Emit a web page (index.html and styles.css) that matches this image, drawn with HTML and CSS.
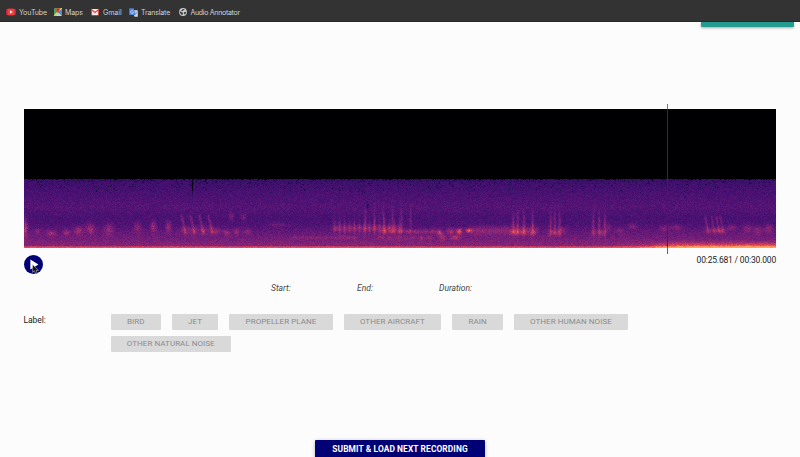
FILE: index.html
```html
<!DOCTYPE html>
<html lang="en">
<head>
<meta charset="utf-8">
<title>Audio Annotator</title>
<link rel="stylesheet" href="styles.css">
</head>
<body>
<nav class="bookmarks">
  <a class="bookmark youtube"><svg viewBox="0 0 10 8"><rect y=".8" width="10" height="6.4" rx="1.6" fill="#c9203f"/><rect x="1.5" y=".8" width="7" height="6.4" rx="1" fill="#f0403f"/><path d="M4 2.5v3L6.8 4z" fill="#fff"/></svg>YouTube</a>
  <a class="bookmark maps"><svg viewBox="0 0 8 8"><rect width="8" height="8" rx="1" fill="#3fa65b"/><path d="M0 7 7 0h1v1L1 8H0z" fill="#f4ca45"/><path d="M4 4 8 8H1z" fill="#c9ced2"/><path d="M4 4 8 1v6.5z" fill="#5389d8"/><path d="M2 1.7a1.9 1.9 0 0 1 3.8 0C5.8 3.4 4.2 4 4 5.4 3.7 4 2 3.4 2 1.7z" fill="#dc493e"/><circle cx="3.9" cy="1.8" r=".6" fill="#792820"/></svg>Maps</a>
  <a class="bookmark gmail"><svg viewBox="0 0 8 8"><rect y="1" width="8" height="6.3" rx=".7" fill="#f3eeee"/><path d="M.6 7V1.7L4 4.5l3.4-2.8V7" fill="none" stroke="#d9423a" stroke-width="1.1"/></svg>Gmail</a>
  <a class="bookmark translate"><svg viewBox="0 0 9 9"><path d="M3.5 2.2h4.7q.6 0 .6.6v5.4q0 .6-.6.6H5.5z" fill="#d5dae1"/><path d="M.7.2h4l2.1 6.7H.7Q.2 6.9.2 6.4V.7Q.2.2.7.2z" fill="#4b82dc"/><path d="M4.5 3.3a1.5 1.5 0 1 0 .1 1H3.3" fill="none" stroke="#fff" stroke-width=".6"/><path d="M6.3 4.2h2M7.6 4.2 6.5 6M6.7 5l1.1 1.3" fill="none" stroke="#697b91" stroke-width=".5"/></svg>Translate</a>
  <a class="bookmark annotator"><svg viewBox="0 0 8 8"><circle cx="4" cy="4" r="3.9" fill="#c9cbcd"/><path d="M.9 3 2.5 4.2l1.2.2.5.8-.6.7.1 1.2C1.9 6.8.7 5.3.9 3zM3.8.9l1.8.4-.4.9-1 .1-.3.8-1.2.2-.5-.6zM5 4.2l2-.5c.2 1.3-.3 2.2-1.2 2.8l-.9-1z" fill="#3b3d40"/></svg>Audio Annotator</a>
</nav>
<main>
  <div class="top-action"></div>
  <section class="player">
    <div class="spectrogram">
      <canvas id="spectrogram" width="752" height="139"></canvas>
      <div class="playhead"></div>
    </div>
    <div class="controls">
      <div class="play"><svg class="play-icon" viewBox="0 0 19 19"><circle cx="9.5" cy="9.5" r="9.5" fill="#010074"/><path d="M6.4 4.6v9.8l8-4.9z" fill="#fff"/></svg><svg class="pointer" viewBox="0 0 8 11"><path d="M.6.6v7.8l1.800-1.600 1.400 3.300 1.500-.7L4 6.300h2.500z" fill="#111" stroke="#ddd" stroke-width=".5"/></svg></div>
      <span class="time">00:25.681 / 00:30.000</span>
    </div>
  </section>
  <div class="region-info"><span class="start">Start:</span><span class="end">End:</span><span class="duration">Duration:</span></div>
  <section class="labels">
    <div class="caption">Label:</div>
    <div class="options">
      <button class="bird">BIRD</button><button class="jet">JET</button><button class="propeller">PROPELLER PLANE</button><button class="aircraft">OTHER AIRCRAFT</button><button class="rain">RAIN</button><button class="human">OTHER HUMAN NOISE</button><button class="natural">OTHER NATURAL NOISE</button>
    </div>
  </section>
  <button class="submit">SUBMIT &amp; LOAD NEXT RECORDING</button>
</main>
<script src="script.js"></script>
</body>
</html>
```
FILE: styles.css
```css
* { box-sizing: border-box; }
body { margin: 0; height: 457px; overflow: hidden; background: #fcfcfc; color: #222; font-family: Roboto, sans-serif; font-size: 8.5px; }
.bookmarks { height: 22px; display: flex; align-items: center; padding: 3px 0 0 6px; background: #333; border-bottom: 1px solid #292929; color: #d2d2d2; font: 7px/9px Inter, sans-serif; }
.bookmark { display: flex; align-items: center; gap: 4px; white-space: nowrap; }
.bookmark svg { width: 8px; height: 8px; flex: none; }
.youtube { width: 48px; gap: 3px; letter-spacing: -.3px; }
.youtube { letter-spacing: -.1px; }
.youtube svg { width: 10px; }
.maps { width: 37px; gap: 3px; letter-spacing: -.1px; }
.gmail { width: 38px; }
.translate { width: 50px; gap: 3px; letter-spacing: -.15px; }
.translate svg { width: 9px; height: 9px; }
.annotator { gap: 3.5px; letter-spacing: -.3px; }
main { display: flex; flex-direction: column; height: 435px; }
.top-action { flex: none; width: 93px; height: 5px; margin-left: auto; margin-right: 6px; background: #239b8e; border-radius: 0 0 1px 1px; box-shadow: 0 1px 3px #0005; }
.player { margin: 82px 24px 0; }
.spectrogram { position: relative; height: 139px; }
canvas { display: block; width: 752px; height: 139px; }
.playhead { position: absolute; left: 643px; top: -5px; width: 1px; height: 150px; background: linear-gradient(#777 0 5px, #303030 5px 143px, #666 143px); }
.controls { display: flex; justify-content: space-between; height: 26px; padding-top: 7px; }
.play { position: relative; width: 19px; height: 19px; margin-left: -.4px; }
.play-icon { display: block; width: 19px; height: 19px; }
.pointer { position: absolute; left: 8px; top: 9px; width: 8px; height: 11px; }
.time { font-size: 8.5px; line-height: 10px; letter-spacing: -.18px; white-space: nowrap; }
.region-info { display: grid; grid-template-columns: 86px 82px 90px; margin: 9px 0 0 271px; font-style: italic; line-height: 10px; color: #444; }
.labels { display: grid; grid-template-columns: 87.2px 535px; margin: 21px 0 0 23.6px; }
.caption { padding-top: 1px; line-height: 10px; letter-spacing: -.1px; }
.options { display: flex; flex-wrap: wrap; gap: 5.5px 11px; }
.options button { height: 16px; padding: 0; border: 0; border-radius: 1px; background: #d9d9d9; color: #8c8c8c; font: 400 8px/16px Roboto, sans-serif; letter-spacing: .05px; white-space: nowrap; }
.options .bird { width: 50px; }
.options .jet { width: 46.6px; }
.options .propeller { width: 103.2px; }
.options .aircraft { width: 97.7px; }
.options .rain { width: 50.7px; }
.options .human { width: 114px; }
.options .natural { width: 120px; }
.submit { flex: none; align-self: center; width: 170px; height: 18px; margin-top: 88.5px; padding: 0; border: 0; border-radius: 1px; background: #010074; color: #fff; box-shadow: 0 1px 4px #0004; font: 700 8.4px/17px Roboto, sans-serif; letter-spacing: .1px; }
```
FILE: script.js
```js
const canvas = document.getElementById('spectrogram');
const ctx = canvas.getContext('2d');
const W = canvas.width, H = canvas.height, TOP = 70;
const stops = [[0,0,0,3],[.12,24,9,58],[.24,53,15,104],[.34,78,18,116],[.46,116,30,121],[.58,157,44,110],[.7,213,62,91],[.82,248,91,72],[1,253,166,85]];
let seed = 48271;
function random() {
  seed = (Math.imul(seed, 1664525) + 1013904223) >>> 0;
  return seed / 4294967296;
}
function color(v) {
  v = Math.max(0, Math.min(1, v));
  let i = 1;
  while (v > stops[i][0]) i++;
  const a = stops[i - 1], b = stops[i], t = (v - a[0]) / (b[0] - a[0]);
  return [1, 2, 3].map(k => a[k] + (b[k] - a[k]) * t);
}
const profile = [[70,.24],[73,.28],[84,.32],[98,.36],[108,.32],[114,.33],[122,.4],[130,.46],[136,.51],[137,.66],[138,.76],[139,.75]];
function base(y) {
  let i = 1;
  while (i < profile.length - 1 && y > profile[i][0]) i++;
  const a = profile[i - 1], b = profile[i];
  return a[1] + (b[1] - a[1]) * (y - a[0]) / (b[0] - a[0]);
}
const level = new Float32Array(W * H);
for (let y = TOP; y < H; y++) for (let x = 0; x < W; x++) {
  let v = base(y) + (random() - .5) * .1;
  if (y < 85 && random() < .1 * (85 - y) / 15) v -= .14;
  if (y < 71 && random() < .2) v = .05;
  level[y * W + x] = v;
}
// Each call is x, y, horizontal radius, vertical radius and added energy.
function call(cx, cy, rx, ry, amount) {
  for (let y = Math.max(TOP, Math.floor(cy - ry * 3)); y < Math.min(H, cy + ry * 3); y++)
    for (let x = Math.max(0, Math.floor(cx - rx * 3)); x < Math.min(W, cx + rx * 3); x++)
      level[y * W + x] += amount * (.65 + random() * .7) * Math.exp(-((x - cx) ** 2 / (2 * rx * rx) + (y - cy) ** 2 / (2 * ry * ry)));
}
const calls = [
  [1,118,1.5,6,.25],[13,122,2,2,.14],[27,124,3,2,.17],[42,123,2,2,.2],[54,121,3,3,.18],[66,119,3,4,.2],[84,120,3,4,.17],
  [113,118,2.5,4,.15],[129,117,2,4,.21],[144,117,2,4,.19],[193,122,2,2,.12],[202,123,2,2,.18],[212,122,2,2,.16],[223,122,2,2,.15],[207,107,2,3,.12],[219,108,2,3,.12],
  [253,115,6,1.5,.1],[415,123,2,2,.26],[426,122,3,2,.22],[435,122,2,2,.4],[444,121,2,1.5,.38],[431,128,3,1.5,.2],[418,128,2,2,.16],
  [538,120,3,2,.12],[584,118,2,2,.12],[596,121,3,2,.1],[608,117,3,2,.14],[640,119,3,2,.13],[652,118,4,2,.13],[707,118,3,2,.13],[723,119,3,3,.13],[733,121,3,3,.12],[744,119,3,3,.14]
];
calls.forEach(c => call(...c));
for (let x = 157; x <= 185; x += 9) {
  for (let y = 106; y < 125; y++) call(x + (y - 106) * .22, y, .9, 1, .06);
  call(x + 4, 121, 3, 3, .12);
}
for (let x = 310; x < 380; x += 5) {
  call(x, 117, .8, 4 + random() * 3, .12);
  call(x + 1, 119, 3, 2.5, .08);
}
for (let x = 341; x < 395; x += 9) call(x, 110, .8, 9, .12);
for (let x = 360; x < 412; x += 8) { call(x, 122, 2.5, 1.5, .17); call(x - 3, 128, 2, 1.5, .1); }
for (let x = 446; x < 514; x++) call(x, 121, 1, 3, .055);
for (const x of [489,493,499,508,526,530,535,569,575,580]) {
  call(x + (random() - .5), 114, .9, 8, .16);
  call(x, 123, 2, 2, .13);
}
for (const x of [682,688,693,697]) {
  for (let y = 107; y < 124; y++) call(x + (y - 113) * .2, y, .8, 1, .05);
  call(x + 1, 121, 3, 2, .1);
}
for (let x = 270; x < 335; x += 6) call(x, 128, 2, 1, .08);
call(168, 77, .5, 6, -.32);
call(343, 96, 1, 2, -.15);
call(661, 138, 30, 3.2, .27);
call(720, 138, 28, 3, .24);
call(752, 138, 20, 3, .16);
const image = ctx.createImageData(W, H);
for (let y = 0; y < H; y++) for (let x = 0; x < W; x++) {
  const rgb = y < TOP ? [0, 0, 3] : color(level[y * W + x]);
  const p = (y * W + x) * 4;
  image.data[p] = rgb[0];
  image.data[p + 1] = rgb[1];
  image.data[p + 2] = rgb[2];
  image.data[p + 3] = 255;
}
ctx.putImageData(image, 0, 0);
```
